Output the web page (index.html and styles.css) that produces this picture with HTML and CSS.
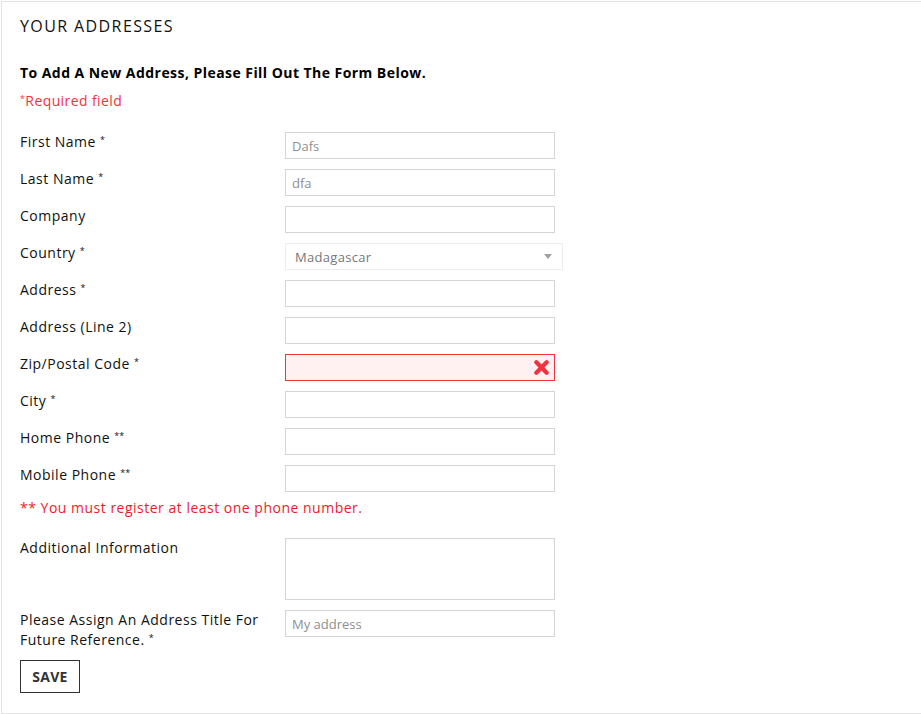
FILE: index.html
```html
<!DOCTYPE html>
<html>
<head>
<meta charset="utf-8">
<link rel="stylesheet" href="styles.css">
</head>
<body>
<div class="box">
  <h1 class="title">YOUR ADDRESSES</h1>
  <p class="intro">To Add A New Address, Please Fill Out The Form Below.</p>
  <p class="required"><sup>*</sup>Required field</p>
  <form class="form">
    <label class="lbl">First Name <sup>*</sup></label>
    <div class="field"><input class="inp" type="text" value="Dafs"></div>

    <label class="lbl">Last Name <sup>*</sup></label>
    <div class="field"><input class="inp" type="text" value="dfa"></div>

    <label class="lbl">Company</label>
    <div class="field"><input class="inp" type="text"></div>

    <label class="lbl">Country <sup>*</sup></label>
    <div class="field">
      <div class="select"><span>Madagascar</span><span class="arrow"></span></div>
    </div>

    <label class="lbl">Address <sup>*</sup></label>
    <div class="field"><input class="inp" type="text"></div>

    <label class="lbl">Address (Line 2)</label>
    <div class="field"><input class="inp" type="text"></div>

    <label class="lbl">Zip/Postal Code <sup>*</sup></label>
    <div class="field">
      <div class="inp error">
        <svg class="xicon" viewBox="0 0 14 14" width="15" height="15"><path d="M2.2 2.2 L11.8 11.8 M11.8 2.2 L2.2 11.8" stroke="#f13340" stroke-width="4" stroke-linecap="round"/></svg>
      </div>
    </div>

    <label class="lbl">City <sup>*</sup></label>
    <div class="field"><input class="inp" type="text"></div>

    <label class="lbl">Home Phone <sup>**</sup></label>
    <div class="field"><input class="inp" type="text"></div>

    <label class="lbl">Mobile Phone <sup>**</sup></label>
    <div class="field"><input class="inp" type="text"></div>

    <p class="phone-note">** You must register at least one phone number.</p>

    <label class="lbl">Additional Information</label>
    <div class="field"><textarea class="inp area"></textarea></div>

    <label class="lbl">Please Assign An Address Title For Future Reference.&nbsp;<sup>*</sup></label>
    <div class="field"><input class="inp" type="text" value="My address"></div>

    <div class="actions"><button type="button" class="save">SAVE</button></div>
  </form>
</div>
</body>
</html>
```
FILE: styles.css
```css
html, body {
  margin: 0;
  padding: 0;
  background: #fff;
}
body {
  font-family: "Open Sans", "Liberation Sans", sans-serif;
  color: #111;
}
.box {
  margin: 1px 1px 0 1px;
  width: 917px;
  height: 711px;
  border: 1px solid #e4e4e4;
  padding: 0 0 0 18px;
  box-sizing: content-box;
}
.title {
  margin: 14px 0 0 0;
  font-family: "Open Sans", sans-serif;
  font-weight: 400;
  font-size: 16px;
  letter-spacing: 1.4px;
  line-height: 20px;
  color: #111;
}
.intro {
  margin: 27px 0 0 0;
  font-size: 14px;
  font-weight: 700;
  letter-spacing: 0.45px;
  line-height: 20px;
  color: #000;
}
.required {
  margin: 8px 0 0 0;
  font-size: 14px;
  letter-spacing: 0.4px;
  line-height: 20px;
  color: #f13340;
}
sup {
  font-size: 9px;
  line-height: 0;
  vertical-align: 4px;
}
.form {
  margin-top: 21px;
  display: grid;
  grid-template-columns: 265px 300px;
  row-gap: 10px;
  align-items: start;
}
.lbl {
  font-size: 14px;
  line-height: 20px;
  letter-spacing: 0.5px;
  color: #111;
}
.lbl sup { letter-spacing: 0; }
.field {
  display: flex;
}
.inp {
  box-sizing: border-box;
  width: 270px;
  height: 27px;
  border: 1px solid #d6d4d4;
  padding: 0 6px;
  font-family: "Open Sans", sans-serif;
  font-size: 13px;
  color: #8f8f8f;
  background: #fff;
  outline: none;
}
.select {
  box-sizing: border-box;
  width: 278px;
  height: 27px;
  border: 1px solid #ececec;
  padding: 0 9px;
  display: flex;
  align-items: center;
  justify-content: space-between;
  font-size: 13px;
  letter-spacing: 0.3px;
  color: #777;
}
.arrow {
  width: 0;
  height: 0;
  border-left: 4.5px solid transparent;
  border-right: 4.5px solid transparent;
  border-top: 5px solid #a0a0a0;
  margin-right: 1px;
}
.error {
  background: #fff1f2;
  border-color: #f13340;
  display: flex;
  align-items: center;
  justify-content: flex-end;
  padding-right: 5px;
}
.phone-note {
  grid-column: 1 / -1;
  margin: -4px 0 10px 0;
  font-size: 14px;
  line-height: 20px;
  letter-spacing: 0.5px;
  color: #f01b2a;
}
.area {
  height: 62px;
  resize: none;
  display: block;
}
.actions {
  grid-column: 1 / -1;
}
.save {
  box-sizing: border-box;
  width: 60px;
  height: 33px;
  border: 1px solid #333;
  background: #fff;
  font-family: "Open Sans", sans-serif;
  font-weight: 700;
  font-size: 14px;
  letter-spacing: 0.3px;
  color: #333;
  padding: 0;
}
```
